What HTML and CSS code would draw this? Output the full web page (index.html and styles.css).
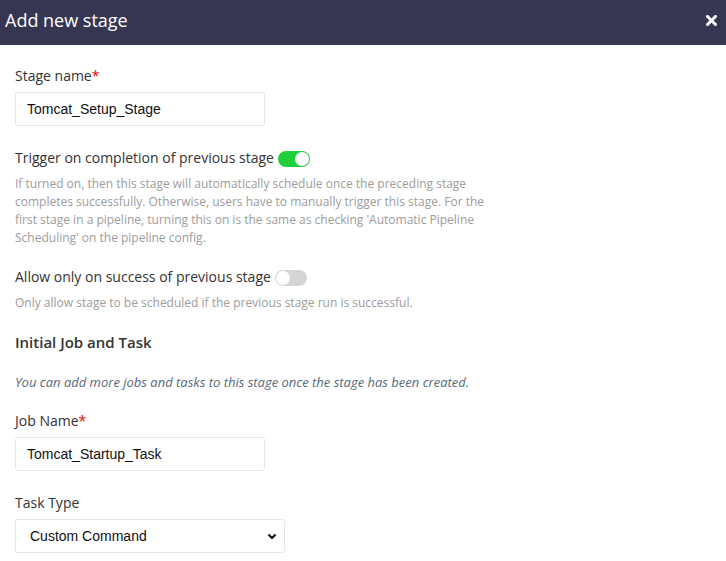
FILE: index.html
```html
<!DOCTYPE html>
<html lang="en">

<head>
    <meta charset="UTF-8">
    <meta name="viewport" content="width=device-width, initial-scale=1.0">
    <title>Add new stage</title>
    <link rel="stylesheet" href="styles.css">
</head>

<body>
    <header class="modal-header">
        <h2>Add new stage</h2>
        <button class="close-button" aria-label="Close">
            <svg width="11" height="11" viewBox="0 0 11 11">
                <path d="M1.5 1.5 L9.5 9.5 M9.5 1.5 L1.5 9.5" stroke="#fff" stroke-width="3" stroke-linecap="square" />
            </svg>
        </button>
    </header>

    <main class="modal-body">
        <div class="field">
            <label>Stage name<span class="required">*</span></label>
            <input type="text" class="text-input" value="Tomcat_Setup_Stage">
        </div>

        <div class="field switch-field">
            <div class="switch-row">
                <span class="switch-label">Trigger on completion of previous stage</span>
                <span class="switch on"></span>
            </div>
            <p class="help">If turned on, then this stage will automatically schedule once the preceding stage completes successfully. Otherwise, users have to manually trigger this stage. For the first stage in a pipeline, turning this on is the same as checking 'Automatic Pipeline Scheduling' on the pipeline config.</p>
        </div>

        <div class="field switch-field">
            <div class="switch-row">
                <span class="switch-label">Allow only on success of previous stage</span>
                <span class="switch"></span>
            </div>
            <p class="help">Only allow stage to be scheduled if the previous stage run is successful.</p>
        </div>

        <h3 class="section-title">Initial Job and Task</h3>
        <p class="note">You can add more jobs and tasks to this stage once the stage has been created.</p>

        <div class="field">
            <label>Job Name<span class="required">*</span></label>
            <input type="text" class="text-input" value="Tomcat_Startup_Task">
        </div>

        <div class="field">
            <label>Task Type</label>
            <div class="select-wrap">
                <select class="select-input">
                    <option>Custom Command</option>
                </select>
                <svg class="chevron" width="10" height="7" viewBox="0 0 10 7">
                    <path d="M1.5 1.5 L5 5 L8.5 1.5" fill="none" stroke="#111" stroke-width="2.2" />
                </svg>
            </div>
        </div>
    </main>
</body>

</html>
```

FILE: styles.css
```css
body {
    margin: 0;
    padding: 0;
    font-family: "Open Sans", sans-serif;
    color: #333;
    background: #fff;
}

.modal-header {
    height: 45px;
    background-color: #363652;
    display: flex;
    align-items: center;
    justify-content: space-between;
    padding: 0 9px 0 5px;
}

.modal-header h2 {
    margin: 0;
    font-size: 18px;
    font-weight: 400;
    color: #fff;
    line-height: 24px;
    margin-top: -5px;
}

.close-button {
    background: none;
    border: none;
    padding: 0;
    cursor: pointer;
    display: flex;
    margin-top: -5px;
}

.modal-body {
    padding: 21px 15px 0 15px;
}

.field {
    margin-bottom: 22px;
}

.field label,
.switch-label {
    display: block;
    font-size: 14px;
    line-height: 20px;
    color: #333;
}

.field label {
    margin-bottom: 6px;
}

.required {
    color: #e00;
}

.text-input {
    box-sizing: border-box;
    width: 250px;
    height: 34px;
    border: 1px solid #e6e6e6;
    border-radius: 3px;
    padding: 0 11px;
    font-family: "Liberation Sans", Arial, sans-serif;
    font-size: 14px;
    color: #111;
    outline: none;
}

.switch-field {
    margin-bottom: 20px;
}

.switch-row {
    display: flex;
    align-items: center;
    gap: 4px;
}

.switch {
    position: relative;
    width: 32px;
    height: 16px;
    border-radius: 8px;
    background-color: #d4d4d4;
    margin-top: 1px;
}

.switch::after {
    content: "";
    position: absolute;
    top: 1px;
    left: 1px;
    width: 14px;
    height: 14px;
    border-radius: 50%;
    background: #fff;
}

.switch.on {
    background-color: #1fcf3c;
}

.switch.on::after {
    left: 17px;
}

.help {
    margin: 7px 0 0 0;
    max-width: 480px;
    font-size: 12px;
    line-height: 18px;
    color: #9c9c9c;
}

.section-title {
    margin: 18px 0 0 0;
    font-size: 15px;
    font-weight: 600;
    line-height: 20px;
    color: #333;
}

.note {
    margin: 21px 0 20px 0;
    font-size: 13px;
    line-height: 18px;
    font-style: italic;
    color: #566a7a;
}

.select-wrap {
    position: relative;
    width: 270px;
}

.select-input {
    box-sizing: border-box;
    width: 270px;
    height: 34px;
    border: 1px solid #e6e6e6;
    border-radius: 3px;
    padding: 0 14px;
    background: #fff;
    font-family: "Liberation Sans", Arial, sans-serif;
    font-size: 14px;
    color: #111;
    -webkit-appearance: none;
    appearance: none;
    outline: none;
}

.chevron {
    position: absolute;
    right: 8px;
    top: 14px;
    pointer-events: none;
}
```
